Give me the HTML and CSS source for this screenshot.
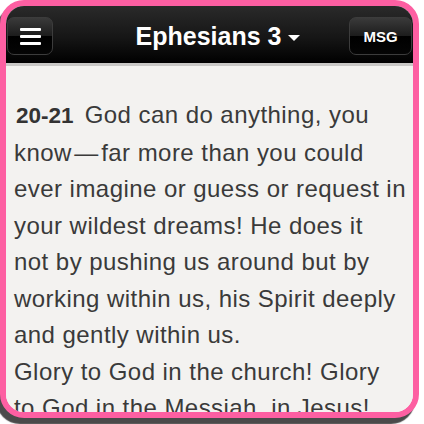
FILE: index.html
```html
<!DOCTYPE html>
<html lang="en">
<head>
    <meta charset="UTF-8">
    <meta name="viewport" content="width=device-width, initial-scale=1.0">
    <title>Ephesians 3</title>
    <link rel="stylesheet" href="styles.css">
</head>
<body>
    <div class="frame">
        <div class="topbar">
            <button class="menu-btn" aria-label="Menu">
                <span class="bar"></span>
                <span class="bar"></span>
                <span class="bar"></span>
            </button>
            <div class="title">Ephesians 3 <span class="caret"></span></div>
            <button class="version-btn">MSG</button>
        </div>

        <div class="reader">
            <p class="verse">
                <b class="verse-num">20-21</b> God can do anything, you<br>
                know&#8202;&mdash;&#8202;far more than you could<br>
                ever imagine or guess or request in<br>
                your wildest dreams! He does it<br>
                not by pushing us around but by<br>
                working within us, his Spirit deeply<br>
                and gently within us.
            </p>
            <p class="verse">
                Glory to God in the church! Glory<br>
                to God in the Messiah, in Jesus!
            </p>
        </div>
    </div>
</body>
</html>
```

FILE: styles.css
```css
html, body
{
    margin: 0;
    height: 100%;
}
body
{
    background: #ffffff;
    font-family: "Liberation Sans", Arial, sans-serif;
    overflow: hidden;
}
.frame
{
    width: 419px;
    height: 418px;
    box-sizing: border-box;
    border: 6px solid #fd5fa2;
    border-radius: 24px;
    overflow: hidden;
    background: #f3f2f0;
    box-shadow: -4px 6px 1px #4a4a4a;
    display: flex;
    flex-direction: column;
}
.topbar
{
    height: 57px;
    flex: none;
    display: grid;
    grid-template-columns: 1fr auto 1fr;
    align-items: center;
    padding: 0 1px;
    background: linear-gradient(#2a2a2a, #161616 55%, #000000);
    border-bottom: 3px solid #c9c8c6;
}
.menu-btn, .version-btn
{
    height: 38px;
    margin-top: 3px;
    border: 1px solid #3c3c3c;
    border-radius: 7px;
    background: linear-gradient(#3a3a3a, #1c1c1c 50%, #000000 51%, #050505);
    color: #ffffff;
    cursor: pointer;
}
.menu-btn
{
    width: 46px;
    justify-self: start;
    display: flex;
    flex-direction: column;
    align-items: center;
    justify-content: center;
    gap: 4px;
    padding: 0;
}
.bar
{
    display: block;
    width: 21px;
    height: 3px;
    border-radius: 1px;
    background: #ffffff;
}
.version-btn
{
    width: 63px;
    justify-self: end;
    font-family: "Liberation Sans", Arial, sans-serif;
    font-weight: bold;
    font-size: 15px;
    padding: 0;
}
.title
{
    color: #ffffff;
    font-weight: bold;
    font-size: 25px;
    margin-top: 3px;
    margin-left: 17px;
    display: flex;
    align-items: center;
}
.caret
{
    display: inline-block;
    width: 0;
    height: 0;
    margin-left: 7px;
    margin-top: 4px;
    border-left: 6px solid transparent;
    border-right: 6px solid transparent;
    border-top: 6px solid #ffffff;
}
.reader
{
    flex: 1;
    padding: 31px 8px 0 8px;
    color: #3a3a3a;
    font-size: 24px;
    letter-spacing: 0.45px;
    line-height: 36.5px;
    white-space: nowrap;
    background: #f3f2f0;
}
.verse
{
    margin: 0;
}
.verse-num
{
    color: #333333;
    font-size: 22.5px;
    letter-spacing: 0;
    margin-left: 2px;
    margin-right: 4px;
}
```
